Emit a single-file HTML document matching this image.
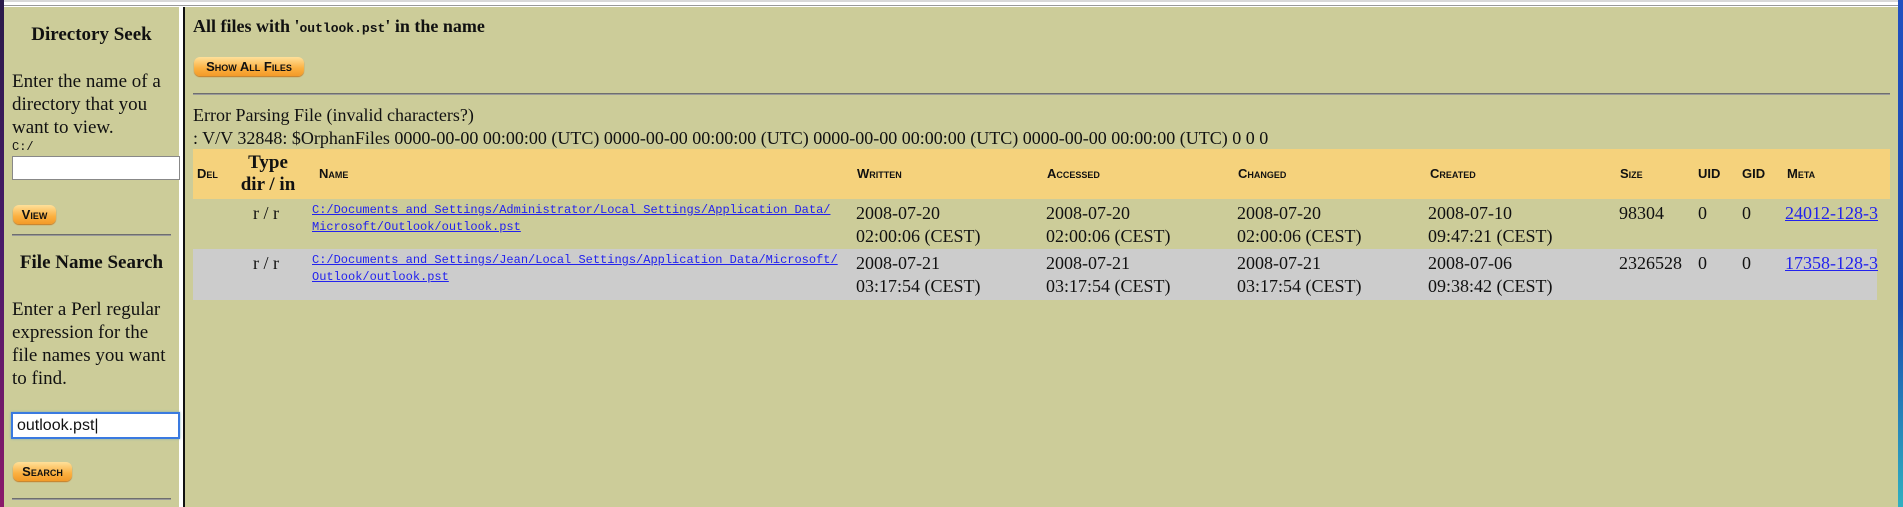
<!DOCTYPE html>
<html><head><meta charset="utf-8"><style>
*{margin:0;padding:0;box-sizing:border-box}
body{width:1903px;height:507px;overflow:hidden;background:#cccc99;position:relative;font-family:"Liberation Serif",serif;color:#111}
.a{position:absolute;white-space:nowrap}
.btn{position:absolute;height:19px;border-radius:6px;background:linear-gradient(#ffe09a,#fbb040 60%,#f39a28);box-shadow:0 1px 1px #c77a20;font:bold 13px "Liberation Sans",sans-serif;font-variant:small-caps;text-align:center;line-height:19px;color:#111}
.hr{position:absolute;height:2px;background:#6e6e6e;border-bottom:1px solid #999}
.p{font-size:19px;line-height:23px}
.th{font:bold 13px "Liberation Sans",sans-serif;font-variant:small-caps;position:absolute}
.d{position:absolute;font-size:18px;line-height:23px;white-space:nowrap}
.lk{position:absolute;font:12px/17px "Liberation Mono",monospace;color:#2222ee;text-decoration:underline;white-space:nowrap}
</style></head><body>
<div class="a" style="left:0;top:0;width:1903px;height:2px;background:#d8d8d8"></div>
<div class="a" style="left:0;top:2px;width:1903px;height:3px;background:#fff"></div>
<div class="a" style="left:0;top:5px;width:1903px;height:1px;background:#999"></div>
<div class="a" style="left:0;top:6px;width:1903px;height:1px;background:#fff"></div>
<div class="a" style="left:0;top:0;width:4px;height:507px;background:linear-gradient(#2a1a4a,#4a1a6a 50%,#8a1a6a)"></div>
<div class="a" style="left:1898px;top:0;width:5px;height:507px;background:linear-gradient(#2050c0,#1a4ab0 60%,#30b0c0)"></div>
<div class="a" style="left:179px;top:7px;width:4px;height:500px;background:#fff"></div>
<div class="a" style="left:183px;top:7px;width:2px;height:500px;background:#111"></div>

<div class="a" style="left:4px;width:175px;top:24px;text-align:center;font-weight:bold;font-size:19px">Directory Seek</div>
<div class="a p" style="left:12px;top:70px">Enter the name of a<br>directory that you<br>want to view.</div>
<div class="a" style="left:12px;top:140px;font:12px 'Liberation Mono',monospace">C:/</div>
<div class="a" style="left:12px;top:156px;width:168px;height:24px;background:#fff;border:1px solid #888"></div>
<div class="btn" style="left:13px;top:205px;width:43px">View</div>
<div class="hr" style="left:12px;top:234px;width:159px"></div>
<div class="a" style="left:4px;width:175px;top:252px;text-align:center;font-weight:bold;font-size:19px">File Name Search</div>
<div class="a p" style="left:12px;top:298px">Enter a Perl regular<br>expression for the<br>file names you want<br>to find.</div>
<div class="a" style="left:11px;top:412px;width:169px;height:27px;background:#fff;border:2px solid #3a7ae0;box-shadow:0 0 2px #7ab;font:16px/23px 'Liberation Sans',sans-serif;padding-left:4px">outlook.pst|</div>
<div class="btn" style="left:13px;top:462px;width:59px">Search</div>
<div class="hr" style="left:12px;top:498px;width:159px"></div>

<div class="a" style="left:193px;top:16px;font-weight:bold;font-size:18px">All files with '<span style="font:bold 13px 'Liberation Mono',monospace">outlook.pst</span>' in the name</div>
<div class="btn" style="left:194px;top:57px;width:110px">Show All Files</div>
<div class="hr" style="left:193px;top:93px;width:1697px"></div>
<div class="a p" style="left:193px;top:104px;font-size:18px">Error Parsing File (invalid characters?)<br>: V/V 32848: $OrphanFiles 0000-00-00 00:00:00 (UTC) 0000-00-00 00:00:00 (UTC) 0000-00-00 00:00:00 (UTC) 0000-00-00 00:00:00 (UTC) 0 0 0</div>

<div class="a" style="left:193px;top:149px;width:1697px;height:50px;background:#f5d27c"></div>
<div class="a" style="left:193px;top:249px;width:1684px;height:51px;background:#cccccc"></div>
<div class="th" style="left:197px;top:166px">Del</div>
<div class="a" style="left:237px;width:62px;top:152px;text-align:center;font-weight:bold;font-size:19px;line-height:22px">Type<br>dir / in</div>
<div class="th" style="left:319px;top:166px">Name</div>
<div class="th" style="left:857px;top:166px">Written</div>
<div class="th" style="left:1047px;top:166px">Accessed</div>
<div class="th" style="left:1238px;top:166px">Changed</div>
<div class="th" style="left:1430px;top:166px">Created</div>
<div class="th" style="left:1620px;top:166px">Size</div>
<div class="th" style="left:1698px;top:166px">UID</div>
<div class="th" style="left:1742px;top:166px">GID</div>
<div class="th" style="left:1787px;top:166px">Meta</div>

<div class="d" style="left:253px;top:202px">r / r</div>
<div class="lk" style="left:312px;top:202px">C:/Documents and Settings/Administrator/Local Settings/Application Data/<br>Microsoft/Outlook/outlook.pst</div>
<div class="d" style="left:856px;top:202px">2008-07-20<br>02:00:06 (CEST)</div>
<div class="d" style="left:1046px;top:202px">2008-07-20<br>02:00:06 (CEST)</div>
<div class="d" style="left:1237px;top:202px">2008-07-20<br>02:00:06 (CEST)</div>
<div class="d" style="left:1428px;top:202px">2008-07-10<br>09:47:21 (CEST)</div>
<div class="d" style="left:1619px;top:202px">98304</div>
<div class="d" style="left:1698px;top:202px">0</div>
<div class="d" style="left:1742px;top:202px">0</div>
<div class="d" style="left:1785px;top:202px;color:#2222ee;text-decoration:underline">24012-128-3</div>

<div class="d" style="left:253px;top:252px">r / r</div>
<div class="lk" style="left:312px;top:252px">C:/Documents and Settings/Jean/Local Settings/Application Data/Microsoft/<br>Outlook/outlook.pst</div>
<div class="d" style="left:856px;top:252px">2008-07-21<br>03:17:54 (CEST)</div>
<div class="d" style="left:1046px;top:252px">2008-07-21<br>03:17:54 (CEST)</div>
<div class="d" style="left:1237px;top:252px">2008-07-21<br>03:17:54 (CEST)</div>
<div class="d" style="left:1428px;top:252px">2008-07-06<br>09:38:42 (CEST)</div>
<div class="d" style="left:1619px;top:252px">2326528</div>
<div class="d" style="left:1698px;top:252px">0</div>
<div class="d" style="left:1742px;top:252px">0</div>
<div class="d" style="left:1785px;top:252px;color:#2222ee;text-decoration:underline">17358-128-3</div>
</body></html>
